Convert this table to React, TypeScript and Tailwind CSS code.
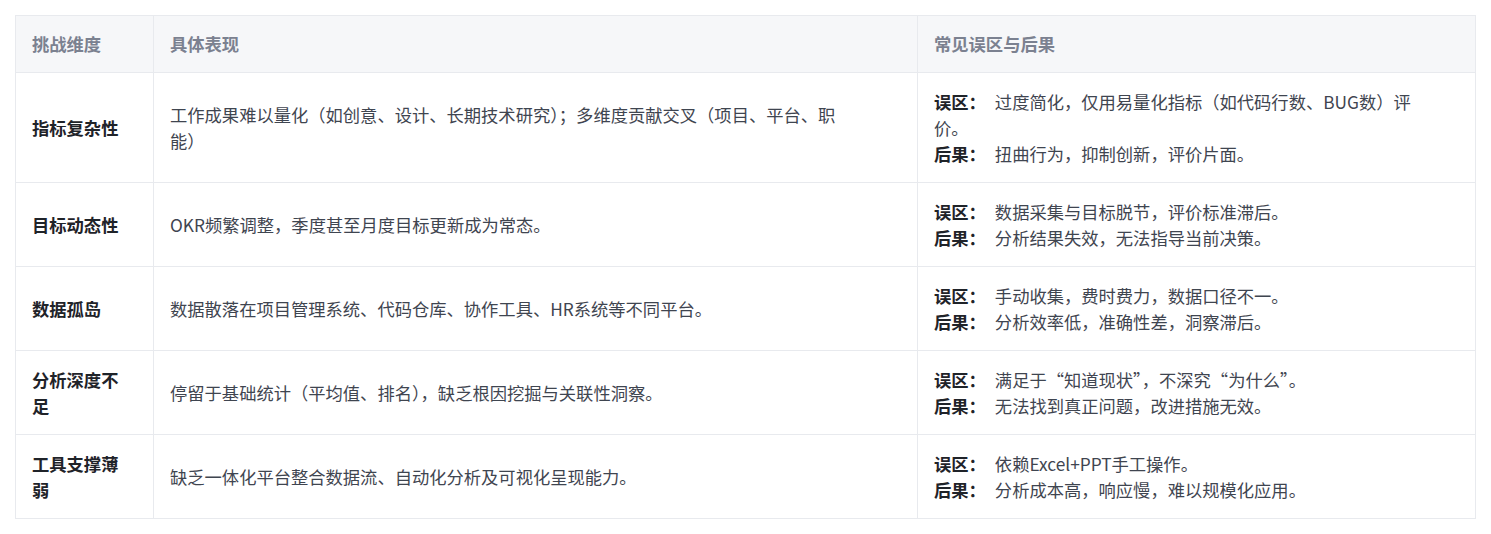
import React from "react";

const rows = [
  {
    dim: "指标复杂性",
    desc: "工作成果难以量化（如创意、设计、长期技术研究）；多维度贡献交叉（项目、平台、职能）",
    mis: "过度简化，仅用易量化指标（如代码行数、BUG数）评价。",
    res: "扭曲行为，抑制创新，评价片面。",
  },
  {
    dim: "目标动态性",
    desc: "OKR频繁调整，季度甚至月度目标更新成为常态。",
    mis: "数据采集与目标脱节，评价标准滞后。",
    res: "分析结果失效，无法指导当前决策。",
  },
  {
    dim: "数据孤岛",
    desc: "数据散落在项目管理系统、代码仓库、协作工具、HR系统等不同平台。",
    mis: "手动收集，费时费力，数据口径不一。",
    res: "分析效率低，准确性差，洞察滞后。",
  },
  {
    dim: "分析深度不足",
    desc: "停留于基础统计（平均值、排名），缺乏根因挖掘与关联性洞察。",
    mis: "满足于\u201c知道现状\u201d，不深究\u201c为什么\u201d。",
    res: "无法找到真正问题，改进措施无效。",
  },
  {
    dim: "工具支撑薄弱",
    desc: "缺乏一体化平台整合数据流、自动化分析及可视化呈现能力。",
    mis: "依赖Excel+PPT手工操作。",
    res: "分析成本高，响应慢，难以规模化应用。",
  },
];

export default function App() {
  return (
    <div
      className="bg-white p-[15px] text-[17.3px]"
      style={{ fontFamily: '"Noto Sans CJK SC", "Noto Sans", sans-serif' }}
    >
      <table className="w-full table-fixed border-collapse border border-[#e8eaee]">
        <colgroup>
          <col className="w-[138px]" />
          <col className="w-[764px]" />
          <col />
        </colgroup>
        <thead>
          <tr className="bg-[#f6f7f9]">
            <th className="border border-[#e8eaee] pl-4 pr-[24px] py-[15px] text-left font-bold leading-[26px] text-[#7b8190]">
              挑战维度
            </th>
            <th className="border border-[#e8eaee] px-4 py-[15px] text-left font-bold leading-[26px] text-[#7b8190]">
              具体表现
            </th>
            <th className="border border-[#e8eaee] px-4 py-[15px] text-left font-bold leading-[26px] text-[#7b8190]">
              常见误区与后果
            </th>
          </tr>
        </thead>
        <tbody>
          {rows.map((r) => (
            <tr key={r.dim}>
              <td className="border border-[#e8eaee] pl-4 pr-[24px] py-[15.5px] align-middle font-bold leading-[26px] text-[#1f2329]">
                {r.dim}
              </td>
              <td className="border border-[#e8eaee] pl-4 pr-[58px] py-[15.5px] align-middle leading-[26px] text-[#3f4550]">
                {r.desc}
              </td>
              <td className="border border-[#e8eaee] pl-4 pr-[47px] py-[15.5px] align-middle leading-[26px] text-[#3f4550]">
                <div>
                  <strong className="mr-[9px] font-bold text-[#1f2329]">误区：</strong>
                  {r.mis}
                </div>
                <div>
                  <strong className="mr-[9px] font-bold text-[#1f2329]">后果：</strong>
                  {r.res}
                </div>
              </td>
            </tr>
          ))}
        </tbody>
      </table>
    </div>
  );
}
